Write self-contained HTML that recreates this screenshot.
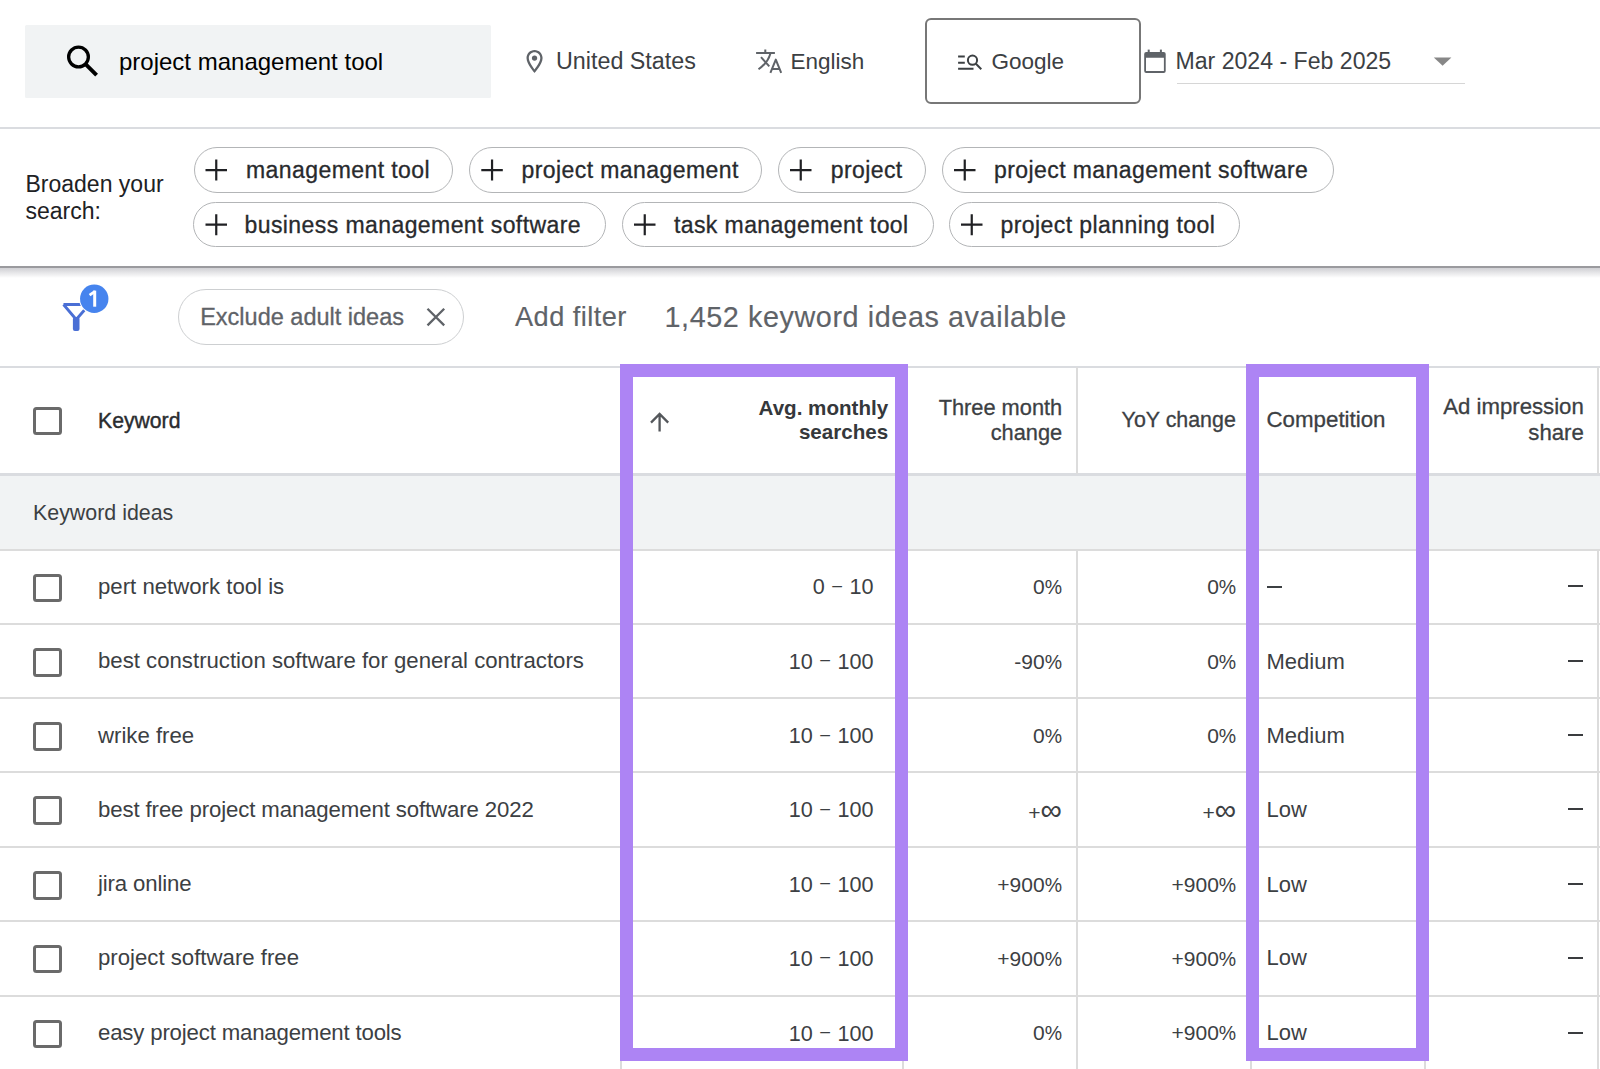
<!DOCTYPE html>
<html><head><meta charset="utf-8"><title>Keyword Planner</title>
<style>
html,body{margin:0;padding:0;}
body{width:1600px;height:1069px;overflow:hidden;position:relative;background:#fff;font-family:"Liberation Sans", sans-serif;}
.t{position:absolute;white-space:nowrap;font-family:"Liberation Sans", sans-serif;}
</style></head><body>
<div style="position:absolute;left:25px;top:25px;width:465.6px;height:72.5px;background:#f1f3f4;border-radius:1.5px;"></div>
<div class="t" style="left:119.00px;top:49.60px;font-size:24px;line-height:24px;color:#000;font-weight:400;">project management tool</div>
<div class="t" style="left:556.00px;top:50.20px;font-size:23.3px;line-height:23.3px;color:#3c4043;font-weight:400;">United States</div>
<div class="t" style="left:790.50px;top:51.07px;font-size:22.5px;line-height:22.5px;color:#3c4043;font-weight:400;">English</div>
<div style="position:absolute;left:925px;top:17.8px;width:215.5px;height:86.4px;border:2px solid #777;border-radius:6px;box-sizing:border-box;"></div>
<div class="t" style="left:991.50px;top:51.07px;font-size:22.5px;line-height:22.5px;color:#3c4043;font-weight:400;">Google</div>
<div class="t" style="left:1175.50px;top:49.86px;font-size:23.1px;line-height:23.1px;color:#3c4043;font-weight:400;">Mar 2024 - Feb 2025</div>
<div style="position:absolute;left:1177px;top:82.5px;width:288px;height:1.8px;background:#d6d6d6;"></div>
<div style="position:absolute;left:0px;top:126.5px;width:1600px;height:2px;background:#dadce0;"></div>
<div class="t" style="left:25.50px;top:172.75px;font-size:23px;line-height:23px;color:#202124;font-weight:400;">Broaden your</div>
<div class="t" style="left:25.50px;top:199.75px;font-size:23px;line-height:23px;color:#202124;font-weight:400;">search:</div>
<div style="position:absolute;left:193.5px;top:147.4px;width:259.8px;height:45.400000000000006px;border:1.8px solid #b3b5b7;border-radius:24px;box-sizing:border-box;"></div>
<svg style="position:absolute;left:0;top:0" width="1600" height="1069" viewBox="0 0 1600 1069"><path d="M205.5 170.10H227.0M216.25 159.60V180.60" stroke="#202124" stroke-width="2.2" fill="none"/></svg>
<div class="t" style="left:246.00px;top:158.95px;font-size:23px;line-height:23px;color:#282a2d;font-weight:400;-webkit-text-stroke:0.3px #282a2d;letter-spacing:0.42px;">management tool</div>
<div style="position:absolute;left:468.7px;top:147.4px;width:293.3px;height:45.400000000000006px;border:1.8px solid #b3b5b7;border-radius:24px;box-sizing:border-box;"></div>
<svg style="position:absolute;left:0;top:0" width="1600" height="1069" viewBox="0 0 1600 1069"><path d="M481.3 170.10H502.8M492.05 159.60V180.60" stroke="#202124" stroke-width="2.2" fill="none"/></svg>
<div class="t" style="left:521.50px;top:158.95px;font-size:23px;line-height:23px;color:#282a2d;font-weight:400;-webkit-text-stroke:0.3px #282a2d;letter-spacing:0.42px;">project management</div>
<div style="position:absolute;left:778.0px;top:147.4px;width:148.39999999999998px;height:45.400000000000006px;border:1.8px solid #b3b5b7;border-radius:24px;box-sizing:border-box;"></div>
<svg style="position:absolute;left:0;top:0" width="1600" height="1069" viewBox="0 0 1600 1069"><path d="M790.0 170.10H811.5M800.75 159.60V180.60" stroke="#202124" stroke-width="2.2" fill="none"/></svg>
<div class="t" style="left:830.70px;top:158.95px;font-size:23px;line-height:23px;color:#282a2d;font-weight:400;-webkit-text-stroke:0.3px #282a2d;letter-spacing:0.42px;">project</div>
<div style="position:absolute;left:942.2px;top:147.4px;width:391.70000000000005px;height:45.400000000000006px;border:1.8px solid #b3b5b7;border-radius:24px;box-sizing:border-box;"></div>
<svg style="position:absolute;left:0;top:0" width="1600" height="1069" viewBox="0 0 1600 1069"><path d="M954.0 170.10H975.5M964.75 159.60V180.60" stroke="#202124" stroke-width="2.2" fill="none"/></svg>
<div class="t" style="left:994.00px;top:158.95px;font-size:23px;line-height:23px;color:#282a2d;font-weight:400;-webkit-text-stroke:0.3px #282a2d;letter-spacing:0.42px;">project management software</div>
<div style="position:absolute;left:193.1px;top:201.8px;width:412.5px;height:45.69999999999999px;border:1.8px solid #b3b5b7;border-radius:24px;box-sizing:border-box;"></div>
<svg style="position:absolute;left:0;top:0" width="1600" height="1069" viewBox="0 0 1600 1069"><path d="M205.5 224.65H227.0M216.25 214.15V235.15" stroke="#202124" stroke-width="2.2" fill="none"/></svg>
<div class="t" style="left:244.50px;top:213.50px;font-size:23px;line-height:23px;color:#282a2d;font-weight:400;-webkit-text-stroke:0.3px #282a2d;letter-spacing:0.42px;">business management software</div>
<div style="position:absolute;left:621.9px;top:201.8px;width:311.80000000000007px;height:45.69999999999999px;border:1.8px solid #b3b5b7;border-radius:24px;box-sizing:border-box;"></div>
<svg style="position:absolute;left:0;top:0" width="1600" height="1069" viewBox="0 0 1600 1069"><path d="M634.0 224.65H655.5M644.75 214.15V235.15" stroke="#202124" stroke-width="2.2" fill="none"/></svg>
<div class="t" style="left:673.90px;top:213.50px;font-size:23px;line-height:23px;color:#282a2d;font-weight:400;-webkit-text-stroke:0.3px #282a2d;letter-spacing:0.42px;">task management tool</div>
<div style="position:absolute;left:949.0px;top:201.8px;width:291.0px;height:45.69999999999999px;border:1.8px solid #b3b5b7;border-radius:24px;box-sizing:border-box;"></div>
<svg style="position:absolute;left:0;top:0" width="1600" height="1069" viewBox="0 0 1600 1069"><path d="M961.0 224.65H982.5M971.75 214.15V235.15" stroke="#202124" stroke-width="2.2" fill="none"/></svg>
<div class="t" style="left:1000.50px;top:213.50px;font-size:23px;line-height:23px;color:#282a2d;font-weight:400;-webkit-text-stroke:0.3px #282a2d;letter-spacing:0.42px;">project planning tool</div>
<div style="position:absolute;left:0px;top:266px;width:1600px;height:2px;background:#9a9a9e;"></div>
<div style="position:absolute;left:0px;top:268px;width:1600px;height:10px;background:linear-gradient(#d0d0d4,rgba(255,255,255,0));"></div>
<div class="t" style="left:200.20px;top:305.93px;font-size:23.5px;line-height:23.5px;color:#5f6368;font-weight:400;-webkit-text-stroke:0.3px #5f6368;">Exclude adult ideas</div>
<div style="position:absolute;left:178.1px;top:288.7px;width:286.1px;height:56.3px;border:1.8px solid #cdcfd1;border-radius:29px;box-sizing:border-box;"></div>
<svg style="position:absolute;left:0;top:0" width="1600" height="1069" viewBox="0 0 1600 1069"><path d="M427.5 308.7L444.2 325.4M444.2 308.7L427.5 325.4" stroke="#5f6368" stroke-width="2.3" fill="none"/></svg>
<div class="t" style="left:515.00px;top:302.68px;font-size:27.2px;line-height:27.2px;color:#5f6368;font-weight:400;-webkit-text-stroke:0.15px #5f6368;letter-spacing:0.45px;">Add filter</div>
<div class="t" style="left:664.50px;top:302.92px;font-size:28.8px;line-height:28.8px;color:#5f6368;font-weight:400;-webkit-text-stroke:0.15px #5f6368;letter-spacing:0.57px;">1,452 keyword ideas available</div>
<svg style="position:absolute;left:0;top:0" width="1600" height="1069" viewBox="0 0 1600 1069"><path d="M63.5 304.5H84M63.5 304.5L76.2 319.5M84.5 310L76.2 319.5" stroke="#4a6fd5" stroke-width="2.8" fill="none" stroke-linejoin="round"/><rect x="72.9" y="317" width="6.6" height="14" rx="2" fill="#4a6fd5"/><circle cx="94.25" cy="298.8" r="15.2" fill="#fff"/><circle cx="94.25" cy="298.8" r="14.2" fill="#4684ee"/></svg>
<svg style="position:absolute;left:0;top:0" width="1600" height="1069" viewBox="0 0 1600 1069"><path d="M94.7 290.6V306.7" stroke="#fff" stroke-width="3"/><path d="M95 291.4L89.6 295.2" stroke="#fff" stroke-width="2.8"/></svg>
<div style="position:absolute;left:0px;top:366px;width:1600px;height:2px;background:#dadce0;"></div>
<div style="position:absolute;left:0px;top:473px;width:1600px;height:3px;background:#dadce0;"></div>
<div style="position:absolute;left:0px;top:476px;width:1600px;height:73px;background:#f1f3f4;"></div>
<div style="position:absolute;left:0px;top:548.5px;width:1600px;height:2px;background:#dcdcdc;"></div>
<div style="position:absolute;left:0px;top:623.0px;width:1600px;height:2px;background:#dcdcdc;"></div>
<div style="position:absolute;left:0px;top:697.3px;width:1600px;height:2px;background:#dcdcdc;"></div>
<div style="position:absolute;left:0px;top:771.4px;width:1600px;height:2px;background:#dcdcdc;"></div>
<div style="position:absolute;left:0px;top:846.1px;width:1600px;height:2px;background:#dcdcdc;"></div>
<div style="position:absolute;left:0px;top:919.8px;width:1600px;height:2px;background:#dcdcdc;"></div>
<div style="position:absolute;left:0px;top:994.7px;width:1600px;height:2px;background:#dcdcdc;"></div>
<div style="position:absolute;left:620.25px;top:367px;width:1.5px;height:107px;background:#dcdcdc;"></div>
<div style="position:absolute;left:620.25px;top:550px;width:1.5px;height:519px;background:#dcdcdc;"></div>
<div style="position:absolute;left:902.25px;top:367px;width:1.5px;height:107px;background:#dcdcdc;"></div>
<div style="position:absolute;left:902.25px;top:550px;width:1.5px;height:519px;background:#dcdcdc;"></div>
<div style="position:absolute;left:1076.25px;top:367px;width:1.5px;height:107px;background:#dcdcdc;"></div>
<div style="position:absolute;left:1076.25px;top:550px;width:1.5px;height:519px;background:#dcdcdc;"></div>
<div style="position:absolute;left:1250.25px;top:367px;width:1.5px;height:107px;background:#dcdcdc;"></div>
<div style="position:absolute;left:1250.25px;top:550px;width:1.5px;height:519px;background:#dcdcdc;"></div>
<div style="position:absolute;left:1424.25px;top:367px;width:1.5px;height:107px;background:#dcdcdc;"></div>
<div style="position:absolute;left:1424.25px;top:550px;width:1.5px;height:519px;background:#dcdcdc;"></div>
<div style="position:absolute;left:1597.45px;top:367px;width:1.5px;height:107px;background:#dcdcdc;"></div>
<div style="position:absolute;left:1597.45px;top:550px;width:1.5px;height:519px;background:#dcdcdc;"></div>
<div style="position:absolute;left:33px;top:406.5px;width:28.5px;height:28.5px;border:3.3px solid #6a6a6a;border-radius:3.5px;box-sizing:border-box;"></div>
<div class="t" style="left:98.00px;top:409.88px;font-size:21.2px;line-height:21.2px;color:#2a2c2f;font-weight:400;-webkit-text-stroke:0.4px #2a2c2f;">Keyword</div>
<div class="t" style="right:711.80px;text-align:right;top:397.69px;font-size:20.6px;line-height:20.6px;color:#35383b;font-weight:700;">Avg. monthly</div>
<div class="t" style="right:711.80px;text-align:right;top:422.29px;font-size:20.6px;line-height:20.6px;color:#35383b;font-weight:700;">searches</div>
<svg style="position:absolute;left:0;top:0" width="1600" height="1069" viewBox="0 0 1600 1069"><path d="M659.6 431.5V414.5M651 422.6L659.6 414L668.2 422.6" stroke="#54575b" stroke-width="2.3" fill="none"/></svg>
<div class="t" style="right:537.80px;text-align:right;top:396.67px;font-size:21.8px;line-height:21.8px;color:#3c4043;font-weight:400;-webkit-text-stroke:0.3px #3c4043;">Three month</div>
<div class="t" style="right:537.80px;text-align:right;top:422.07px;font-size:21.8px;line-height:21.8px;color:#3c4043;font-weight:400;-webkit-text-stroke:0.3px #3c4043;">change</div>
<div class="t" style="right:364.20px;text-align:right;top:409.91px;font-size:21.4px;line-height:21.4px;color:#3c4043;font-weight:400;-webkit-text-stroke:0.3px #3c4043;">YoY change</div>
<div class="t" style="left:1266.50px;top:409.15px;font-size:22.3px;line-height:22.3px;color:#3c4043;font-weight:400;-webkit-text-stroke:0.3px #3c4043;">Competition</div>
<div class="t" style="right:16.20px;text-align:right;top:396.33px;font-size:22.2px;line-height:22.2px;color:#3c4043;font-weight:400;-webkit-text-stroke:0.3px #3c4043;">Ad impression</div>
<div class="t" style="right:16.20px;text-align:right;top:421.73px;font-size:22.2px;line-height:22.2px;color:#3c4043;font-weight:400;-webkit-text-stroke:0.3px #3c4043;">share</div>
<div class="t" style="left:33.00px;top:502.91px;font-size:21.4px;line-height:21.4px;color:#3c4043;font-weight:400;">Keyword ideas</div>
<div style="position:absolute;left:33px;top:573.5px;width:28.5px;height:28.5px;border:3.3px solid #6a6a6a;border-radius:3.5px;box-sizing:border-box;"></div>
<div class="t" style="left:98.00px;top:575.83px;font-size:22.2px;line-height:22.2px;color:#3c4043;font-weight:400;">pert network tool is</div>
<div class="t" style="right:726.50px;text-align:right;top:576.34px;font-size:21.6px;line-height:21.6px;color:#3c4043;font-weight:400;word-spacing:1.5px;">0 <span style="font-size:17.5px;position:relative;top:-3.5px">–</span> 10</div>
<div class="t" style="right:538.00px;text-align:right;top:576.25px;font-size:21px;line-height:21px;color:#3c4043;font-weight:400;">0<span style="font-size:19.5px">%</span></div>
<div class="t" style="right:363.80px;text-align:right;top:576.25px;font-size:21px;line-height:21px;color:#3c4043;font-weight:400;">0<span style="font-size:19.5px">%</span></div>
<div style="position:absolute;left:1267px;top:586px;width:15px;height:2px;background:#3c4043;"></div>
<div style="position:absolute;left:1568.3px;top:585.4px;width:14.4px;height:2px;background:#3a3c3f;"></div>
<div style="position:absolute;left:33px;top:648.0px;width:28.5px;height:28.5px;border:3.3px solid #6a6a6a;border-radius:3.5px;box-sizing:border-box;"></div>
<div class="t" style="left:98.00px;top:650.33px;font-size:22.2px;line-height:22.2px;color:#3c4043;font-weight:400;">best construction software for general contractors</div>
<div class="t" style="right:726.50px;text-align:right;top:650.84px;font-size:21.6px;line-height:21.6px;color:#3c4043;font-weight:400;word-spacing:1.5px;">10 <span style="font-size:17.5px;position:relative;top:-3.5px">–</span> 100</div>
<div class="t" style="right:538.00px;text-align:right;top:650.75px;font-size:21px;line-height:21px;color:#3c4043;font-weight:400;">-90<span style="font-size:19.5px">%</span></div>
<div class="t" style="right:363.80px;text-align:right;top:650.75px;font-size:21px;line-height:21px;color:#3c4043;font-weight:400;">0<span style="font-size:19.5px">%</span></div>
<div class="t" style="left:1266.50px;top:650.50px;font-size:22px;line-height:22px;color:#3c4043;font-weight:400;">Medium</div>
<div style="position:absolute;left:1568.3px;top:659.9px;width:14.4px;height:2px;background:#3a3c3f;"></div>
<div style="position:absolute;left:33px;top:722.3px;width:28.5px;height:28.5px;border:3.3px solid #6a6a6a;border-radius:3.5px;box-sizing:border-box;"></div>
<div class="t" style="left:98.00px;top:724.63px;font-size:22.2px;line-height:22.2px;color:#3c4043;font-weight:400;">wrike free</div>
<div class="t" style="right:726.50px;text-align:right;top:725.14px;font-size:21.6px;line-height:21.6px;color:#3c4043;font-weight:400;word-spacing:1.5px;">10 <span style="font-size:17.5px;position:relative;top:-3.5px">–</span> 100</div>
<div class="t" style="right:538.00px;text-align:right;top:725.05px;font-size:21px;line-height:21px;color:#3c4043;font-weight:400;">0<span style="font-size:19.5px">%</span></div>
<div class="t" style="right:363.80px;text-align:right;top:725.05px;font-size:21px;line-height:21px;color:#3c4043;font-weight:400;">0<span style="font-size:19.5px">%</span></div>
<div class="t" style="left:1266.50px;top:724.80px;font-size:22px;line-height:22px;color:#3c4043;font-weight:400;">Medium</div>
<div style="position:absolute;left:1568.3px;top:734.1999999999999px;width:14.4px;height:2px;background:#3a3c3f;"></div>
<div style="position:absolute;left:33px;top:796.4px;width:28.5px;height:28.5px;border:3.3px solid #6a6a6a;border-radius:3.5px;box-sizing:border-box;"></div>
<div class="t" style="left:98.00px;top:798.73px;font-size:22.2px;line-height:22.2px;color:#3c4043;font-weight:400;letter-spacing:-0.11px;">best free project management software 2022</div>
<div class="t" style="right:726.50px;text-align:right;top:799.24px;font-size:21.6px;line-height:21.6px;color:#3c4043;font-weight:400;word-spacing:1.5px;">10 <span style="font-size:17.5px;position:relative;top:-3.5px">–</span> 100</div>
<div class="t" style="right:538.00px;text-align:right;top:799.15px;font-size:21px;line-height:21px;color:#3c4043;font-weight:400;">+<span style="font-size:30px;position:relative;top:0px">∞</span></div>
<div class="t" style="right:363.80px;text-align:right;top:799.15px;font-size:21px;line-height:21px;color:#3c4043;font-weight:400;">+<span style="font-size:30px;position:relative;top:0px">∞</span></div>
<div class="t" style="left:1266.50px;top:798.90px;font-size:22px;line-height:22px;color:#3c4043;font-weight:400;">Low</div>
<div style="position:absolute;left:1568.3px;top:808.3px;width:14.4px;height:2px;background:#3a3c3f;"></div>
<div style="position:absolute;left:33px;top:871.1px;width:28.5px;height:28.5px;border:3.3px solid #6a6a6a;border-radius:3.5px;box-sizing:border-box;"></div>
<div class="t" style="left:98.00px;top:873.43px;font-size:22.2px;line-height:22.2px;color:#3c4043;font-weight:400;letter-spacing:-0.15px;">jira online</div>
<div class="t" style="right:726.50px;text-align:right;top:873.94px;font-size:21.6px;line-height:21.6px;color:#3c4043;font-weight:400;word-spacing:1.5px;">10 <span style="font-size:17.5px;position:relative;top:-3.5px">–</span> 100</div>
<div class="t" style="right:538.00px;text-align:right;top:873.85px;font-size:21px;line-height:21px;color:#3c4043;font-weight:400;">+900<span style="font-size:19.5px">%</span></div>
<div class="t" style="right:363.80px;text-align:right;top:873.85px;font-size:21px;line-height:21px;color:#3c4043;font-weight:400;">+900<span style="font-size:19.5px">%</span></div>
<div class="t" style="left:1266.50px;top:873.60px;font-size:22px;line-height:22px;color:#3c4043;font-weight:400;">Low</div>
<div style="position:absolute;left:1568.3px;top:883.0px;width:14.4px;height:2px;background:#3a3c3f;"></div>
<div style="position:absolute;left:33px;top:944.8px;width:28.5px;height:28.5px;border:3.3px solid #6a6a6a;border-radius:3.5px;box-sizing:border-box;"></div>
<div class="t" style="left:98.00px;top:947.13px;font-size:22.2px;line-height:22.2px;color:#3c4043;font-weight:400;">project software free</div>
<div class="t" style="right:726.50px;text-align:right;top:947.64px;font-size:21.6px;line-height:21.6px;color:#3c4043;font-weight:400;word-spacing:1.5px;">10 <span style="font-size:17.5px;position:relative;top:-3.5px">–</span> 100</div>
<div class="t" style="right:538.00px;text-align:right;top:947.55px;font-size:21px;line-height:21px;color:#3c4043;font-weight:400;">+900<span style="font-size:19.5px">%</span></div>
<div class="t" style="right:363.80px;text-align:right;top:947.55px;font-size:21px;line-height:21px;color:#3c4043;font-weight:400;">+900<span style="font-size:19.5px">%</span></div>
<div class="t" style="left:1266.50px;top:947.30px;font-size:22px;line-height:22px;color:#3c4043;font-weight:400;">Low</div>
<div style="position:absolute;left:1568.3px;top:956.6999999999999px;width:14.4px;height:2px;background:#3a3c3f;"></div>
<div style="position:absolute;left:33px;top:1019.7px;width:28.5px;height:28.5px;border:3.3px solid #6a6a6a;border-radius:3.5px;box-sizing:border-box;"></div>
<div class="t" style="left:98.00px;top:1022.03px;font-size:22.2px;line-height:22.2px;color:#3c4043;font-weight:400;letter-spacing:-0.165px;">easy project management tools</div>
<div class="t" style="right:726.50px;text-align:right;top:1022.54px;font-size:21.6px;line-height:21.6px;color:#3c4043;font-weight:400;word-spacing:1.5px;">10 <span style="font-size:17.5px;position:relative;top:-3.5px">–</span> 100</div>
<div class="t" style="right:538.00px;text-align:right;top:1022.45px;font-size:21px;line-height:21px;color:#3c4043;font-weight:400;">0<span style="font-size:19.5px">%</span></div>
<div class="t" style="right:363.80px;text-align:right;top:1022.45px;font-size:21px;line-height:21px;color:#3c4043;font-weight:400;">+900<span style="font-size:19.5px">%</span></div>
<div class="t" style="left:1266.50px;top:1022.20px;font-size:22px;line-height:22px;color:#3c4043;font-weight:400;">Low</div>
<div style="position:absolute;left:1568.3px;top:1031.6000000000001px;width:14.4px;height:2px;background:#3a3c3f;"></div>
<div style="position:absolute;left:619.5px;top:364px;width:288.5px;height:696.6px;border:13.3px solid #ad84f4;box-sizing:border-box;"></div>
<div style="position:absolute;left:1246.3px;top:364px;width:182.5px;height:696.6px;border:13.3px solid #ad84f4;box-sizing:border-box;"></div>
<svg style="position:absolute;left:0;top:0" width="1600" height="1069" viewBox="0 0 1600 1069"><circle cx="78.5" cy="57" r="9.85" stroke="#000" stroke-width="3.3" fill="none"/><path d="M85.8 64.3L96.6 75.1" stroke="#000" stroke-width="3.9" fill="none"/></svg>
<svg style="position:absolute;left:0;top:0" width="1600" height="1069" viewBox="0 0 1600 1069"><g transform="translate(520.75 47.7) scale(1.15)"><path d="M12 2C8.13 2 5 5.13 5 9c0 5.25 7 13 7 13s7-7.75 7-13c0-3.87-3.13-7-7-7zM7 9c0-2.76 2.24-5 5-5s5 2.24 5 5c0 2.88-2.88 7.19-5 9.88C9.92 16.21 7 11.85 7 9z" fill="#5f6368"/><circle cx="12" cy="9" r="2.3" fill="#5f6368"/></g></svg>
<svg style="position:absolute;left:0;top:0" width="1600" height="1069" viewBox="0 0 1600 1069"><g stroke="#5f6368" stroke-width="2" fill="none"><path d="M756.1 52.9H774.9M765.3 49.4V52.9"/><path d="M770.4 53.4C768.8 59.5 764.5 65 758.5 69.3"/><path d="M761 57.2L769.3 66.3"/><path d="M770.4 72.8L775.8 59.6L781.2 72.8M772.6 68.9H779" stroke-linejoin="round"/></g></svg>
<svg style="position:absolute;left:0;top:0" width="1600" height="1069" viewBox="0 0 1600 1069"><g stroke="#3c4043" stroke-width="2" fill="none"><path d="M958.1 56.6H964.8M958.1 62.65H964.8M958.1 68.7H973.5"/><circle cx="972.5" cy="60.2" r="4.6"/><path d="M975.9 63.8L981.3 69.2"/></g></svg>
<svg style="position:absolute;left:0;top:0" width="1600" height="1069" viewBox="0 0 1600 1069"><g fill="#5f6368"><path d="M1146.2 52H1163.7A2 2 0 0 1 1165.7 54V70.9A2 2 0 0 1 1163.7 72.9H1146.2A2 2 0 0 1 1144.2 70.9V54A2 2 0 0 1 1146.2 52ZM1146 57.8V71.1H1163.9V57.8Z" fill-rule="evenodd"/><rect x="1147.7" y="49.6" width="2" height="3"/><rect x="1159.9" y="49.6" width="2" height="3"/></g></svg>
<svg style="position:absolute;left:0;top:0" width="1600" height="1069" viewBox="0 0 1600 1069"><path d="M1433.8 57.4H1451.4L1442.6 65.8Z" fill="#878787"/></svg>
</body></html>
